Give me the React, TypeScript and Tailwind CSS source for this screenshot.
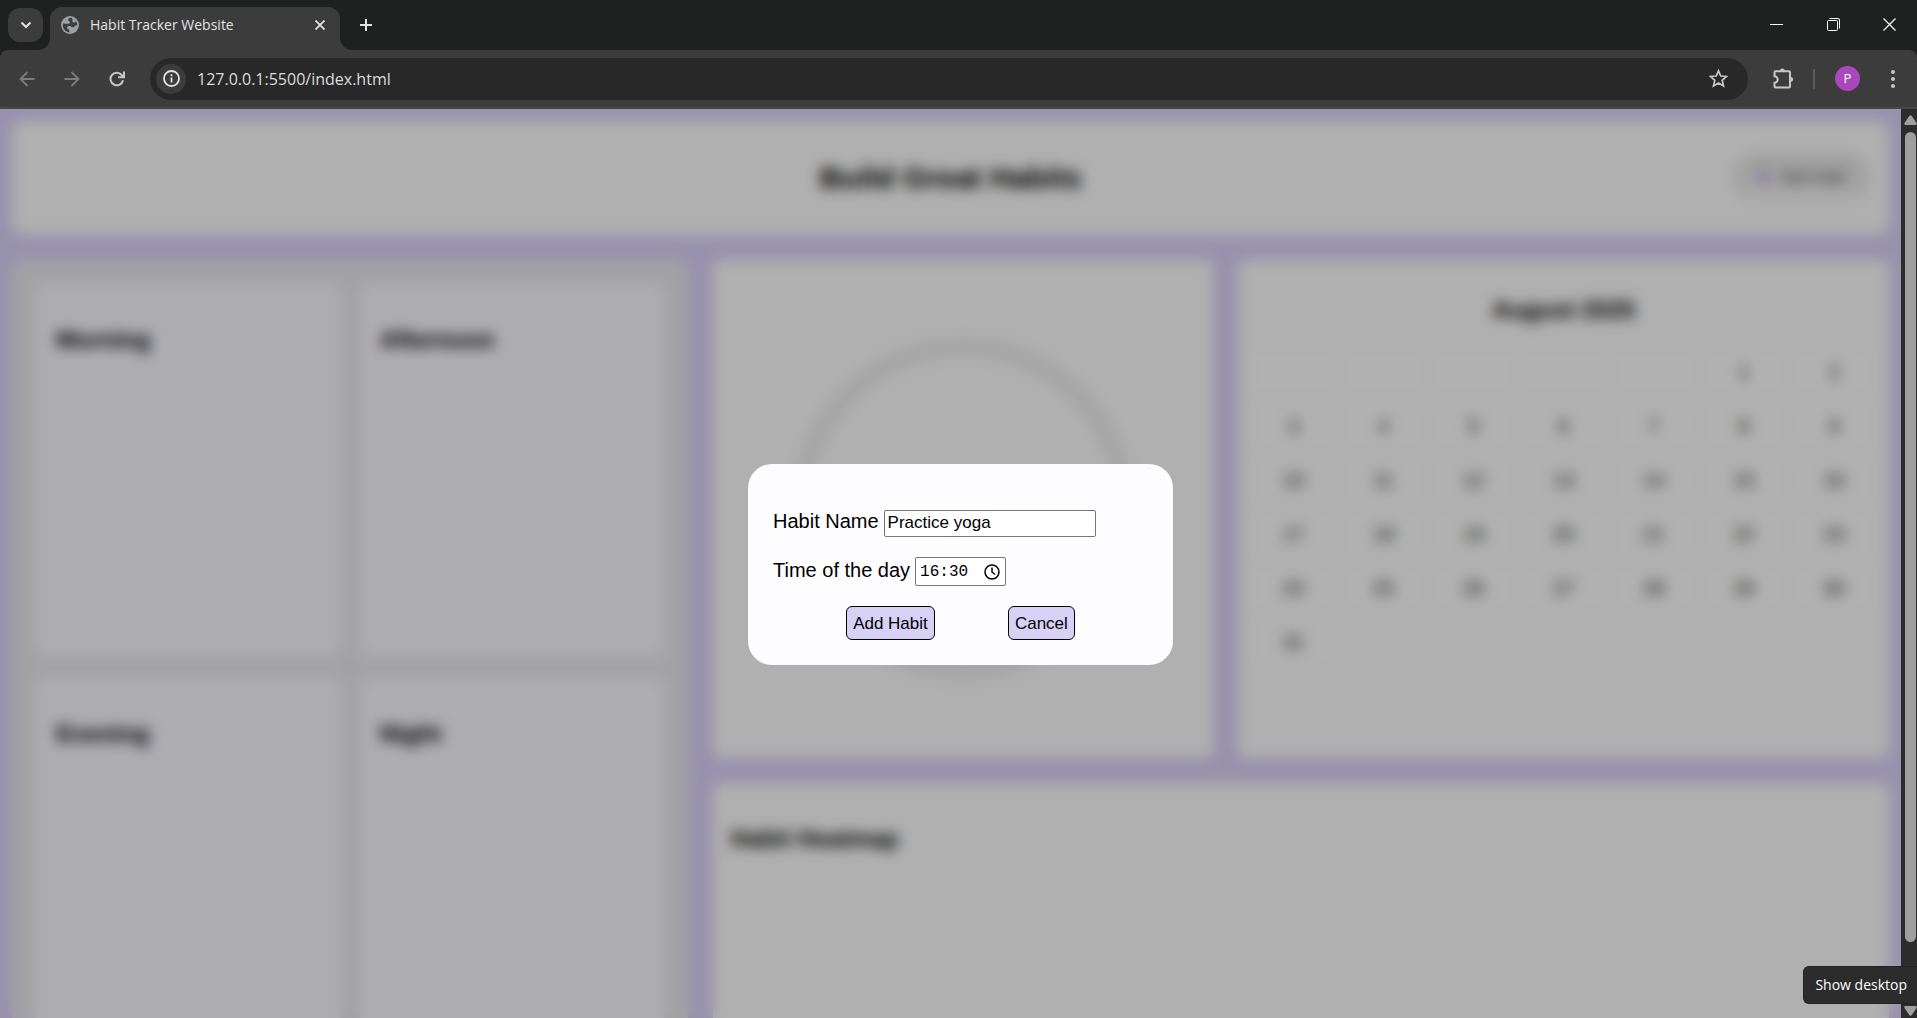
import type { ReactNode } from "react";

const UI = 'font-["Open_Sans","Noto_Sans",sans-serif]';

function IconButton({ label, className = "", children }: { label: string; className?: string; children: ReactNode }) {
  return (
    <button type="button" aria-label={label} className={`flex shrink-0 items-center justify-center ${className}`}>
      {children}
    </button>
  );
}

function TabStrip() {
  return (
    <div className="flex h-[50px] shrink-0 items-stretch bg-[#1f2120]">
      <IconButton label="Search tabs" className="mt-2 ml-2 h-[34px] w-[35px] rounded-xl bg-[#3c3c3c] text-[#e3e3e3]">
        <svg width="12" height="8" viewBox="0 0 12 8" fill="none" stroke="currentColor" strokeWidth="2">
          <path d="M1.5 1.500 6 6l4.500-4.500" />
        </svg>
      </IconButton>
      <div className="relative mt-[7px] ml-[7px] flex w-[290px] items-center rounded-t-xl bg-[#3c3c3c] pr-3 pb-[7px] pl-[11px]">
        <svg className="absolute bottom-0 -left-3 text-[#3c3c3c]" width="12" height="12" viewBox="0 0 12 12" fill="currentColor">
          <path d="M12 0v12H0A12 12 0 0 0 12 0Z" />
        </svg>
        <svg className="absolute -right-3 bottom-0 text-[#3c3c3c]" width="12" height="12" viewBox="0 0 12 12" fill="currentColor">
          <path d="M0 0v12h12A12 12 0 0 1 0 0Z" />
        </svg>
        <svg width="18" height="18" viewBox="0 0 18 18">
          <circle cx="9" cy="9" r="9" fill="#9aa0a6" />
          <path
            d="M10.500 1.800C8 1.500 7 3 7.300 4.300c.3 1.200 1.700.9 1.900 2 .2 1-.7 1.400-1.900 1.500C5.800 8 4 7.500 2 7.600 1.400 10 2.200 12.600 4 14.400c1.300 1.200 2.900 1.800 4.300 1.900v-2c0-1.300-2.300-1-2.300-2.600 0-1.200 1.200-1.700 2.500-1.600 1.600 0 2 1.200 3.300 1.200 1.600 0 1.500-1.700 2.700-1.900.7-.1 1.300 0 1.700.2.100-1.500-.2-2.900-1-4.100-.9.300-1.700 1.300-2.900 1-1.100-.3-1.300-1.400-.7-2.200.3-.6-.4-1.500-1.100-2.500Z"
            fill="#3c3c3c"
          />
        </svg>
        <span className={`ml-[11px] flex-1 text-sm whitespace-nowrap text-[#e3e3e3] ${UI}`}>Habit Tracker Website</span>
        <IconButton label="Close tab" className="h-4 w-4 text-[#e3e3e3]">
          <svg width="10" height="10" viewBox="0 0 10 10" stroke="currentColor" strokeWidth="1.800">
            <path d="m.5.5 9 9m0-9-9 9" />
          </svg>
        </IconButton>
      </div>
      <IconButton label="New tab" className="ml-4 w-5 text-[#e3e3e3]">
        <svg width="12" height="12" viewBox="0 0 12 12" stroke="currentColor" strokeWidth="2">
          <path d="M6 0v12M0 6h12" />
        </svg>
      </IconButton>
      <div className="ml-auto flex pb-[2px] text-white">
        <IconButton label="Minimize" className="w-[55px]">
          <svg width="13" height="13" viewBox="0 0 13 13" stroke="currentColor">
            <path d="M0 6.500h13" />
          </svg>
        </IconButton>
        <IconButton label="Restore" className="w-[58px]">
          <svg width="13" height="13" viewBox="0 0 13 13" fill="none" stroke="currentColor">
            <rect x=".5" y="2.500" width="10" height="10" rx="1" />
            <path d="M2.500.5H11a1.500 1.500 0 0 1 1.500 1.500v8.500" />
          </svg>
        </IconButton>
        <IconButton label="Close" className="mr-px w-[54px]">
          <svg width="13" height="13" viewBox="0 0 13 13" stroke="currentColor" strokeWidth="1.200">
            <path d="m.5.5 12 12m0-12-12 12" />
          </svg>
        </IconButton>
      </div>
    </div>
  );
}

function Toolbar() {
  return (
    <div className="flex h-[59px] shrink-0 items-center rounded-t-lg border-b-2 border-[#474747] bg-[#3c3c3c]">
      <div className="flex gap-[25px] pl-[17px]">
        <IconButton label="Back" className="h-5 w-5 text-[#7d7d7d]">
          <svg width="16" height="16" viewBox="0 0 16 16" fill="none" stroke="currentColor" strokeWidth="1.800">
            <path d="M15.500 8H2m6.500-7L1.500 8l7 7" />
          </svg>
        </IconButton>
        <IconButton label="Forward" className="h-5 w-5 text-[#7d7d7d]">
          <svg width="16" height="16" viewBox="0 0 16 16" fill="none" stroke="currentColor" strokeWidth="1.800">
            <path d="M.5 8H14M7.500 1l7 7-7 7" />
          </svg>
        </IconButton>
        <IconButton label="Reload" className="h-5 w-5 text-[#c7c7c7]">
          <svg width="16" height="16" viewBox="0 0 16 16" fill="none" stroke="currentColor" strokeWidth="2">
            <path d="M14 9.200A6.300 6.300 0 1 1 12.700 4L15 6.300M15 .5v5.800H9.200" />
          </svg>
        </IconButton>
      </div>
      <div className="ml-[23px] flex h-[42px] flex-1 items-center rounded-full bg-[#282828] pr-5 pl-[6px]">
        <IconButton label="View site information" className="h-[30px] w-[30px] rounded-full bg-[#3c3c3c] text-[#e3e3e3]">
          <svg width="17" height="17" viewBox="0 0 17 17" fill="none" stroke="currentColor" strokeWidth="1.800">
            <circle cx="8.500" cy="8.500" r="7.500" />
            <path d="M8.500 7.500v5M8.500 4.200v2" />
          </svg>
        </IconButton>
        <input
          aria-label="Address"
          defaultValue="127.0.0.1:5500/index.html"
          className={`ml-[11px] min-w-0 flex-1 bg-transparent text-base text-[#dcdcdc] outline-none ${UI}`}
        />
        <IconButton label="Bookmark this tab" className="h-5 w-5 text-[#c7c7c7]">
          <svg width="19" height="19" viewBox="0 0 19 19" fill="none" stroke="currentColor" strokeWidth="1.700">
            <path d="m9.500 1.800 2.300 5.200 5.700.5-4.300 3.800 1.300 5.600-5-3-5 3 1.300-5.600L1.500 7.500 7.200 7Z" />
          </svg>
        </IconButton>
      </div>
      <div className="flex items-center pl-[23px] text-[#c7c7c7]">
        <IconButton label="Extensions" className="h-6 w-6">
          <svg width="22" height="22" viewBox="0 0 22 22">
            <path
              d="M3.500 3.300H17a1 1 0 0 1 1 1V18.500a1 1 0 0 1-1 1H3.500a1 1 0 0 1-1-1V14.700a3.200 3.200 0 0 0 0-6.400V4.300a1 1 0 0 1 1-1Z"
              fill="none"
              stroke="currentColor"
              strokeWidth="2"
            />
            <path d="M7.600 2.700a2.700 2.700 0 0 1 5.300 0ZM18.600 9a2.500 2.500 0 0 1 0 5Z" fill="currentColor" />
          </svg>
        </IconButton>
        <div className="ml-[18px] h-5 w-0.5 rounded-full bg-[#5e5e5e]" />
        <button type="button" aria-label="Profile" className={`ml-5 h-[25px] w-[25px] rounded-full bg-[#ab47bc] text-[13px] text-white ${UI}`}>
          P
        </button>
        <IconButton label="Menu" className="mr-[14px] ml-[23px] h-5 w-5">
          <svg width="4" height="18" viewBox="0 0 4 18" fill="currentColor">
            <circle cx="2" cy="2" r="2" />
            <circle cx="2" cy="9" r="2" />
            <circle cx="2" cy="16" r="2" />
          </svg>
        </IconButton>
      </div>
    </div>
  );
}

function HabitPage() {
  const blanks = Array.from({ length: 5 }, (_, i) => i);
  const days = Array.from({ length: 31 }, (_, i) => i + 1);
  return (
    <div className="flex flex-col gap-[25px] bg-[#d9d1f7] p-3 text-black">
      <header className="grid grid-cols-[1fr_auto_1fr] items-center rounded-xl bg-[#fcfcfc] px-5 py-[33px]">
        <h1 className="col-start-2 text-3xl leading-[48px] font-bold">Build Great Habits</h1>
        <button
          type="button"
          className="flex h-12 items-center gap-2 justify-self-end rounded-3xl border-x-[10px] border-t-[16px] border-b-4 border-[#e4e4e4] border-b-[#f4f4f4] bg-[#efefef] px-3 pb-3 text-base text-[#444444]"
        >
          <span className="text-lg leading-5 font-bold text-[#a58bdc]">✚</span>
          Add habit
        </button>
      </header>
      <main className="grid grid-cols-[1.35fr_1fr_1.3fr] grid-rows-[498px_498px] gap-[25px]">
        <section className="row-span-2 grid grid-cols-2 grid-rows-[372px_372px] gap-x-5 gap-y-[22px] rounded-xl bg-[#e9e8ed] p-6">
          {["Morning", "Afternoon", "Evening", "Night"].map((name) => (
            <article key={name} className="rounded-lg bg-[#f9f8fe] px-5 pt-10">
              <h2 className="text-2xl font-bold">{name}</h2>
            </article>
          ))}
        </section>
        <section className="flex items-center justify-center rounded-lg bg-[#fcfcfc]">
          <svg width="344" height="344" viewBox="0 0 344 344" fill="none">
            <circle cx="172" cy="172" r="162" stroke="#ededed" strokeWidth="18" />
          </svg>
        </section>
        <section className="rounded-lg bg-[#fcfcfc] px-[15px] pt-[34px]">
          <h2 className="text-center text-2xl font-bold">August 2025</h2>
          <div className="mt-6 grid grid-cols-7 gap-[10px] text-center text-xl leading-[44px] text-[#333333]">
            {blanks.map((b) => (
              <span key={b} className="rounded-lg bg-[#fefefe]" />
            ))}
            {days.map((d) => (
              <span key={d} className="rounded-lg bg-[#fefefe]">
                {d}
              </span>
            ))}
          </div>
        </section>
        <section className="col-span-2 col-start-2 rounded-lg bg-[#fcfcfc] px-[18px] pt-10">
          <h2 className="text-2xl font-bold">Habit Heatmap</h2>
        </section>
      </main>
    </div>
  );
}

function HabitDialog() {
  const button = "h-[34px] rounded-md border border-black bg-[#d8d1f6] px-[6px] text-[17px] leading-none";
  return (
    <div className="absolute inset-0 flex items-center justify-center bg-black/30 pt-0.5 pl-5 backdrop-blur-[7px]">
      <form
        role="dialog"
        aria-label="Add habit"
        onSubmit={(e) => e.preventDefault()}
        className="flex w-[425px] flex-col gap-5 rounded-3xl bg-[#fdfdff] p-[25px] pt-[45px] text-black"
      >
        <div className="flex items-center gap-[5px]">
          <label htmlFor="habit-name" className="pb-1 text-xl leading-6">
            Habit Name
          </label>
          <input
            id="habit-name"
            defaultValue="Practice yoga"
            className="h-[27px] w-[212px] rounded-xs border border-[#767676] bg-white px-[3px] text-[17px]"
          />
        </div>
        <div className="flex items-center gap-[5px]">
          <label htmlFor="habit-time" className="pb-1 text-xl leading-6">
            Time of the day
          </label>
          <div className="flex h-[29px] w-[91px] items-center rounded-xs border border-[#767676] bg-white pr-[5px] pl-1">
            <input
              id="habit-time"
              defaultValue="16:30"
              className='min-w-0 flex-1 bg-transparent font-["Liberation_Mono",monospace] text-base outline-none'
            />
            <IconButton label="Show time picker" className="h-4 w-4">
              <svg width="16" height="16" viewBox="0 0 16 16" fill="none" stroke="currentColor" strokeWidth="1.500">
                <circle cx="8" cy="8" r="7" />
                <path d="M8 3.500V8l3 2.500" />
              </svg>
            </IconButton>
          </div>
        </div>
        <div className="flex justify-evenly">
          <button type="submit" className={button}>
            Add Habit
          </button>
          <button type="button" className={button}>
            Cancel
          </button>
        </div>
      </form>
    </div>
  );
}

function Scrollbar() {
  return (
    <div className="flex w-4 shrink-0 flex-col items-center bg-[#2c2c2c] pt-[6px] pb-[2px] pl-[3px] text-[#9f9f9f]">
      <svg width="13" height="10" viewBox="0 0 13 10" fill="currentColor">
        <path d="M5.400.8a1.300 1.300 0 0 1 2.200 0l4.900 7.200c.5.900.1 2-1 2H1.500c-1.100 0-1.500-1.100-1-2Z" />
      </svg>
      <div className="mt-[7px] w-[11px] flex-1 rounded-full bg-[#9f9f9f]" />
      <svg className="mt-16" width="13" height="10" viewBox="0 0 13 10" fill="currentColor">
        <path d="M5.400 9.200a1.300 1.300 0 0 0 2.200 0l4.900-7.200c.5-.9.1-2-1-2H1.500C.4 0 0 1.100.5 2Z" />
      </svg>
    </div>
  );
}

export default function App() {
  return (
    <div className='flex h-screen flex-col overflow-hidden bg-[#1f2120] font-["Liberation_Sans",Arial,sans-serif]'>
      <TabStrip />
      <Toolbar />
      <div className="relative flex min-h-0 flex-1">
        <div className="relative min-w-0 flex-1 overflow-hidden">
          <HabitPage />
          <HabitDialog />
        </div>
        <Scrollbar />
        <div
          role="tooltip"
          className={`absolute right-0 bottom-[14px] rounded-l-md border border-r-0 border-[#232323] bg-[#2c2c2c] py-1.5 pr-[10px] pl-[11px] text-sm leading-6 text-white ${UI}`}
        >
          Show desktop
        </div>
      </div>
    </div>
  );
}
